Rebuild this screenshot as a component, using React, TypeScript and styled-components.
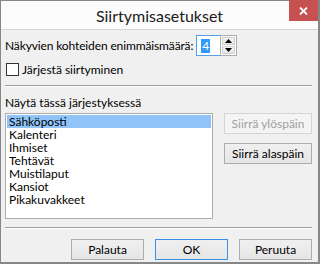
import React from "react";
import styled, { createGlobalStyle } from "styled-components";

const FONT = `Lato, "Noto Sans", "DejaVu Sans", sans-serif`;

const Global = createGlobalStyle`
  html, body { margin: 0; padding: 0; background: #ffffff; }
  * { box-sizing: border-box; }
  body { font-family: ${FONT}; }
`;

const Window = styled.div`
  position: relative;
  width: 320px;
  height: 264px;
  border-style: solid;
  border-color: #878787;
  border-width: 1px 2px 2px 1px;
  background: #f0f0f0;
  display: flex;
  flex-direction: column;
  font-family: ${FONT};
  font-size: 12px;
  color: #000;
`;

const TitleBar = styled.div`
  position: relative;
  height: 29px;
  flex: none;
  background: #fcfcfc;
  border-bottom: 1px solid #d6d6d6;
  display: flex;
  align-items: center;
  justify-content: center;
`;

const Title = styled.div`
  font-size: 16px;
  color: #1a1a1a;
  margin-top: 1px;
`;

const CloseButton = styled.div`
  position: absolute;
  top: -1px;
  right: 0;
  width: 29px;
  height: 21px;
  background: #c75050;
  display: flex;
  align-items: center;
  justify-content: center;
`;

const Client = styled.div`
  flex: 1;
  display: flex;
  flex-direction: column;
  padding: 5px 6px 0 4px;
`;

const SpinRow = styled.div`
  display: flex;
  align-items: center;
  height: 21px;
`;

const Label = styled.span`
  white-space: nowrap;
  margin-right: 3px;
  letter-spacing: -0.13px;
`;

const Spin = styled.div`
  display: flex;
  height: 21px;
`;

const SpinInput = styled.div`
  width: 24px;
  height: 21px;
  border: 1px solid #569de5;
  border-right: none;
  background: #fff;
  display: flex;
  align-items: center;
  padding-left: 4px;
`;

const Selected = styled.span`
  background: #3399ff;
  color: #fff;
  line-height: 14px;
  padding: 0 1px;
`;

const SpinButtons = styled.div`
  width: 17px;
  height: 21px;
  border: 1px solid #acacac;
  display: flex;
  flex-direction: column;
  background: #fff;
  padding: 1px;
  gap: 1px;
`;

const SpinBtn = styled.div`
  flex: 1;
  background: linear-gradient(#f2f2f2, #e6e6e6);
  border: 1px solid #d0d0d0;
  display: flex;
  align-items: center;
  justify-content: center;
`;

const CheckRow = styled.label`
  display: flex;
  align-items: center;
  margin-top: 6px;
  height: 14px;
  margin-left: 1px;
`;

const CheckBox = styled.span`
  width: 13px;
  height: 13px;
  border: 1px solid #333;
  background: #fff;
  margin-right: 3px;
  flex: none;
`;

const Separator = styled.div<{ $top: number }>`
  height: 2px;
  border-top: 1px solid #a0a0a0;
  border-bottom: 1px solid #ffffff;
  margin-top: ${(p) => p.$top}px;
`;

const SectionLabel = styled.div`
  margin-top: 8px;
  line-height: 16px;
`;

const ListArea = styled.div`
  display: flex;
  gap: 11px;
  margin-top: 2px;
`;

const ListBox = styled.div`
  width: 208px;
  height: 106px;
  border: 1px solid #abadb3;
  background: #fff;
  padding: 1px;
  display: flex;
  flex-direction: column;
`;

const Item = styled.div<{ $selected?: boolean }>`
  height: 13px;
  line-height: 13px;
  padding-left: 2px;
  background: ${(p) => (p.$selected ? "#90c4f8" : "transparent")};
  white-space: nowrap;
`;

const SideButtons = styled.div`
  display: flex;
  flex-direction: column;
  gap: 9px;
`;

const Button = styled.div<{ $width: number; $disabled?: boolean; $default?: boolean }>`
  width: ${(p) => p.$width}px;
  height: 21px;
  display: flex;
  align-items: center;
  justify-content: center;
  border: 1px solid
    ${(p) => (p.$default ? "#3c8fe6" : p.$disabled ? "#d5d5d5" : "#acacac")};
  background: ${(p) =>
    p.$disabled ? "#f4f4f4" : "linear-gradient(#f0f0f0, #e5e5e5)"};
  color: ${(p) => (p.$disabled ? "#a0a0a0" : "#000")};
  white-space: nowrap;
`;

const Footer = styled.div`
  display: flex;
  justify-content: flex-end;
  gap: 11px;
  margin-top: 10px;
`;

const items = [
  "Sähköposti",
  "Kalenteri",
  "Ihmiset",
  "Tehtävät",
  "Muistilaput",
  "Kansiot",
  "Pikakuvakkeet",
];

export default function App() {
  return (
    <>
      <Global />
      <Window>
        <TitleBar>
          <Title>Siirtymisasetukset</Title>
          <CloseButton>
            <svg width="9" height="8" viewBox="0 0 9 8">
              <path d="M1 0.5 L8 7.5 M8 0.5 L1 7.5" stroke="#fff" strokeWidth="1.8" />
            </svg>
          </CloseButton>
        </TitleBar>
        <Client>
          <SpinRow>
            <Label>Näkyvien kohteiden enimmäismäärä:</Label>
            <Spin>
              <SpinInput>
                <Selected>4</Selected>
              </SpinInput>
              <SpinButtons>
                <SpinBtn>
                  <svg width="7" height="4" viewBox="0 0 7 4">
                    <path d="M3.5 0 L7 4 L0 4 Z" fill="#000" />
                  </svg>
                </SpinBtn>
                <SpinBtn>
                  <svg width="7" height="4" viewBox="0 0 7 4">
                    <path d="M0 0 L7 0 L3.5 4 Z" fill="#000" />
                  </svg>
                </SpinBtn>
              </SpinButtons>
            </Spin>
          </SpinRow>
          <CheckRow>
            <CheckBox />
            <span>Järjestä siirtyminen</span>
          </CheckRow>
          <Separator $top={9} />
          <SectionLabel>Näytä tässä järjestyksessä</SectionLabel>
          <ListArea>
            <ListBox>
              {items.map((t, i) => (
                <Item key={t} $selected={i === 0}>
                  {t}
                </Item>
              ))}
            </ListBox>
            <SideButtons>
              <Button $width={88} $disabled>
                Siirrä ylöspäin
              </Button>
              <Button $width={88}>Siirrä alaspäin</Button>
            </SideButtons>
          </ListArea>
          <Separator $top={8} />
          <Footer>
            <Button $width={73}>Palauta</Button>
            <Button $width={73} $default>
              OK
            </Button>
            <Button $width={73}>Peruuta</Button>
          </Footer>
        </Client>
      </Window>
    </>
  );
}
